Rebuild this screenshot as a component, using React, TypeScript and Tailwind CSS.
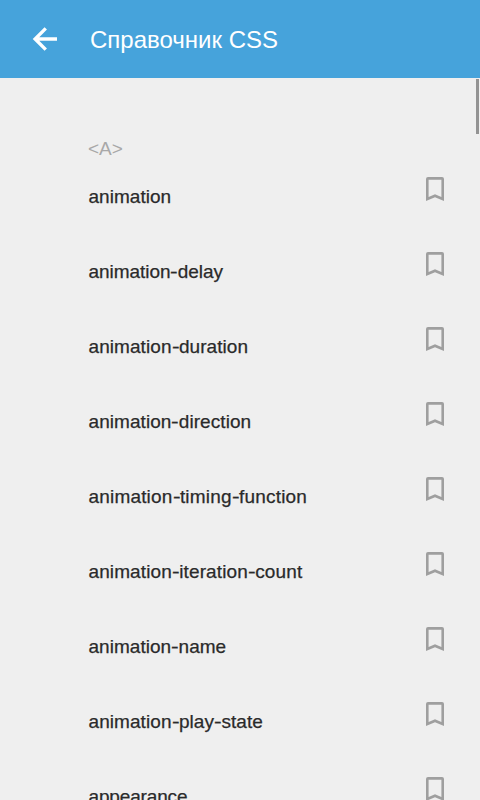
import { Fragment } from "react";

type Property = {
  name: string;
  tracking: string;
};

type PropertyItemProps = {
  property: Property;
};

const sections = [
  {
    title: "<A>",
    items: [
      { name: "animation", tracking: "tracking-[0.03px]" },
      { name: "animation-delay", tracking: "tracking-[-0.05px]" },
      { name: "animation-duration", tracking: "tracking-[0.07px]" },
      { name: "animation-direction", tracking: "tracking-[0.06px]" },
      { name: "animation-timing-function", tracking: "tracking-[0.18px]" },
      { name: "animation-iteration-count", tracking: "tracking-[0.11px]" },
      { name: "animation-name", tracking: "tracking-[0.03px]" },
      { name: "animation-play-state", tracking: "tracking-[0.07px]" },
      { name: "appearance", tracking: "tracking-[-0.15px]" },
    ],
  },
];

function BackIcon() {
  return (
    <svg
      viewBox="0 0 24 24"
      className="h-9 w-9"
      fill="none"
      stroke="currentColor"
      strokeWidth="2.25"
    >
      <path d="M20 12H5.5M12.5 4.9L5.4 12l7.1 7.1" />
    </svg>
  );
}

function BookmarkIcon() {
  return (
    <svg viewBox="0 0 18 24" className="h-6 w-[18px]" fill="#9f9f9f">
      <path
        fillRule="evenodd"
        d="M2 0h14A2 2 0 0 1 18 2V24l-9-3.8-9 3.8V2A2 2 0 0 1 2 0zM2.6 2.7v17.4L9 17.2l6.4 2.9V2.7z"
      />
    </svg>
  );
}

function PropertyItem({ property }: PropertyItemProps) {
  // the hyphen is drawn a bit wider than the font's own one
  const words = property.name.split("-");

  return (
    <li className="flex h-[75px] items-start justify-between pl-[88.5px] pr-9">
      <span
        className={`pt-2 text-[19px] leading-6 whitespace-nowrap text-[#2a2a2a] [-webkit-text-stroke:0.25px_#2a2a2a] ${property.tracking}`}
      >
        {words.map((word, i) => (
          <Fragment key={i}>
            {i > 0 && (
              <span className="inline-block w-[7.4px] origin-left scale-x-[1.2]">
                -
              </span>
            )}
            {word}
          </Fragment>
        ))}
      </span>
      <button aria-label="bookmark" className="h-6 w-[18px]">
        <BookmarkIcon />
      </button>
    </li>
  );
}

export default function App() {
  return (
    <div className="relative flex h-screen flex-col overflow-hidden bg-[#efefef] font-['Liberation_Sans',sans-serif]">
      <header className="flex h-[78px] shrink-0 items-center bg-[#46a3db] pl-[27px] text-white">
        <button aria-label="back" className="h-9 w-9">
          <BackIcon />
        </button>
        <h1 className="ml-[27px] pt-0.5 text-[24px] leading-8">
          Справочник CSS
        </h1>
      </header>

      <main className="min-h-0 flex-1 overflow-hidden pt-[59px]">
        {sections.map((section) => (
          <section key={section.title}>
            <h2 className="pl-[88px] text-[19px] leading-6 text-[#a8a8a8]">
              {section.title}
            </h2>
            <ul className="pt-4">
              {section.items.map((item) => (
                <PropertyItem key={item.name} property={item} />
              ))}
            </ul>
          </section>
        ))}
      </main>

      {/* scroll thumb */}
      <div className="absolute top-[79px] right-px h-[55px] w-[3px] bg-[#939393]" />
    </div>
  );
}
